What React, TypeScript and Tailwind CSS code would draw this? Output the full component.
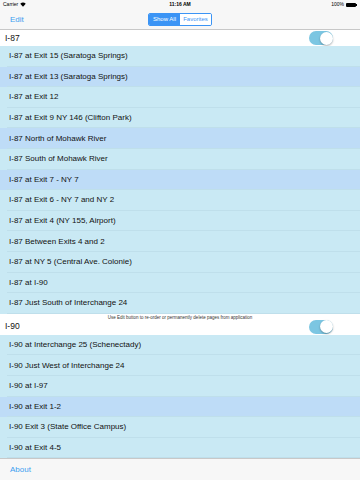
import React from "react";

const i87 = [
  { name: "I-87 at Exit 15 (Saratoga Springs)" },
  { name: "I-87 at Exit 13 (Saratoga Springs)", fav: true },
  { name: "I-87 at Exit 12" },
  { name: "I-87 at Exit 9 NY 146 (Clifton Park)" },
  { name: "I-87 North of Mohawk River", fav: true },
  { name: "I-87 South of Mohawk River" },
  { name: "I-87 at Exit 7 - NY 7", fav: true },
  { name: "I-87 at Exit 6 - NY 7 and NY 2" },
  { name: "I-87 at Exit 4 (NY 155, Airport)" },
  { name: "I-87 Between Exits 4 and 2" },
  { name: "I-87 at NY 5 (Central Ave. Colonie)" },
  { name: "I-87 at I-90" },
  { name: "I-87 Just South of Interchange 24" },
];

const i90 = [
  { name: "I-90 at Interchange 25 (Schenectady)" },
  { name: "I-90 Just West of Interchange 24" },
  { name: "I-90 at I-97" },
  { name: "I-90 at Exit 1-2", fav: true },
  { name: "I-90 Exit 3 (State Office Campus)" },
  { name: "I-90 at Exit 4-5" },
];

function Toggle() {
  return (
    <div className="relative h-[14px] w-[24px] rounded-full bg-[#7cc6e2]">
      <div className="absolute right-[0.5px] top-[0.5px] h-[13px] w-[13px] rounded-full bg-white shadow-[0_1px_2px_rgba(0,0,0,0.3)]" />
    </div>
  );
}

function Row({ name, fav }: { name: string; fav?: boolean }) {
  return (
    <div className={`relative flex h-[20.6px] items-center pl-[9px] text-[8px] text-[#111] ${fav ? "bg-[#bedcf7]" : "bg-[#c9e9f4]"}`}>
      {name}
      <div className="absolute bottom-0 left-[7px] right-0 h-px bg-[#bfdfeb]" />
    </div>
  );
}

export default function App() {
  return (
    <div className="flex h-[480px] w-[360px] flex-col overflow-hidden bg-white font-['Liberation_Sans',Arial,sans-serif]">
      <div className="h-[30px] shrink-0 border-b border-[#c8c8c8] bg-[#f7f7f7]">
        <div className="relative flex h-[9.5px] items-center justify-between px-[3px] text-[5px] text-black">
          <span className="flex items-center gap-[2px]">
            Carrier
            <svg width="6" height="5" viewBox="0 0 12 9">
              <path d="M6 9 L0.5 3 A8 8 0 0 1 11.5 3 Z" fill="#000" />
            </svg>
          </span>
          <span className="absolute left-1/2 -translate-x-1/2 font-bold">11:16 AM</span>
          <span className="flex items-center gap-[2px]">
            100%
            <span className="flex items-center">
              <span className="h-[4px] w-[10px] rounded-[1px] bg-black" />
              <span className="h-[2px] w-[1px] bg-black" />
            </span>
          </span>
        </div>
        <div className="relative flex h-[20px] items-center px-[10px]">
          <span className="text-[8px] text-[#3d9ef0]">Edit</span>
          <div className="absolute left-[148px] top-[3px] flex h-[13px] w-[64px] overflow-hidden rounded-[2px] border border-[#3b94f5] text-[6px]">
            <div className="flex w-1/2 items-center justify-center bg-[#3b94f5] text-white">Show All</div>
            <div className="flex w-1/2 items-center justify-center bg-white text-[#3b94f5]">Favorites</div>
          </div>
        </div>
      </div>

      <div className="flex h-[16px] items-center justify-between pl-[5px] pr-[27px] text-[8.5px] text-[#111]">
        <span>I-87</span>
        <Toggle />
      </div>
      {i87.map((r, i) => (
        <Row key={i} name={r.name} fav={r.fav} />
      ))}

      <div className="relative flex h-[21px] items-center justify-between pl-[5px] pr-[27px] pt-[5px] text-[8.5px] text-[#111]">
        <span className="absolute left-0 right-0 top-[1px] text-center text-[4.5px] text-[#333]">
          Use Edit button to re-order or permanently delete pages from application
        </span>
        <span>I-90</span>
        <Toggle />
      </div>
      {i90.map((r, i) => (
        <Row key={i} name={r.name} fav={r.fav} />
      ))}

      <div className="flex flex-1 items-center border-t border-[#c8c8c8] bg-[#f7f7f7] px-[10px] text-[8px] text-[#3d9ef0]">
        About
      </div>
    </div>
  );
}
